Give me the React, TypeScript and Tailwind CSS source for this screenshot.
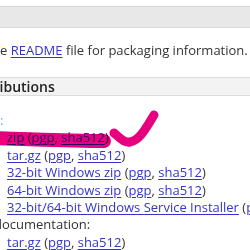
import React from "react";

const link = "text-[#3434c8] underline underline-offset-2 decoration-1";

function Row({ label, indent = true }: { label: string; indent?: boolean }) {
  return (
    <li className={`whitespace-nowrap ${indent ? "pl-[7px]" : ""}`}>
      <a className={link}>{label}</a> (<a className={link}>pgp</a>, <a className={link}>sha512</a>)
    </li>
  );
}

export default function App() {
  return (
    <div className="relative w-[250px] h-[250px] overflow-hidden bg-white font-['Open_Sans',sans-serif] text-[13px] text-[#333]">
      <div className="h-[6px]" />
      <div className="h-[22px] bg-[#e8e8e8] border-y border-[#d8d8d8]" />

      <p className="mt-[14px] leading-[17px] whitespace-nowrap">
        e <a className={link}>README</a> file for packaging information. I
      </p>

      <div className="mt-[18px] h-[19px] bg-[#f3f3f3] border-y border-[#dcdcdc] flex items-center">
        <h3 className="-ml-[33px] font-semibold text-[14px] text-[#222] whitespace-nowrap">
          Distributions
        </h3>
      </div>

      <ul className="pt-[16px] leading-[17.4px]">
        <li className="text-[#6fa8e0]">:</li>
        <Row label="zip" />
        <Row label="tar.gz" />
        <Row label="32-bit Windows zip" />
        <Row label="64-bit Windows zip" />
        <Row label="32-bit/64-bit Windows Service Installer" />
        <li className="-ml-[6px] whitespace-nowrap">documentation:</li>
        <Row label="tar.gz" />
      </ul>

      <svg
        className="absolute left-0 top-0 mix-blend-multiply pointer-events-none"
        width="250"
        height="250"
        viewBox="0 0 250 250"
      >
        <path
          d="M-6 138 C30 139 70 141 104 141"
          stroke="#e6007e"
          strokeWidth="14"
          fill="none"
          strokeLinecap="round"
        />
        <path
          d="M114 133 C120 138 124 143 130 142 C140 140 146 128 154 115"
          stroke="#e6007e"
          strokeWidth="9"
          fill="none"
          strokeLinecap="round"
        />
      </svg>
    </div>
  );
}
